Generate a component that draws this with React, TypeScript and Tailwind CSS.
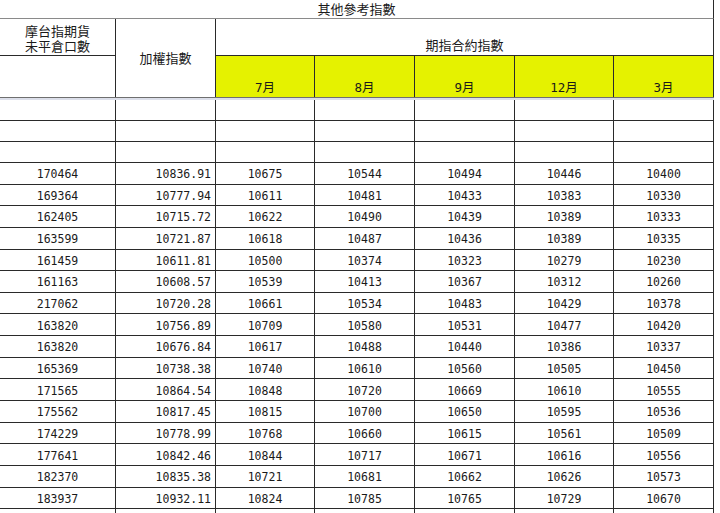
import React from "react";

const cols = "grid grid-cols-[116px_100px_99px_100px_100px_99px_100px]";

const rows: string[][] = [
  ["170464", "10836.91", "10675", "10544", "10494", "10446", "10400"],
  ["169364", "10777.94", "10611", "10481", "10433", "10383", "10330"],
  ["162405", "10715.72", "10622", "10490", "10439", "10389", "10333"],
  ["163599", "10721.87", "10618", "10487", "10436", "10389", "10335"],
  ["161459", "10611.81", "10500", "10374", "10323", "10279", "10230"],
  ["161163", "10608.57", "10539", "10413", "10367", "10312", "10260"],
  ["217062", "10720.28", "10661", "10534", "10483", "10429", "10378"],
  ["163820", "10756.89", "10709", "10580", "10531", "10477", "10420"],
  ["163820", "10676.84", "10617", "10488", "10440", "10386", "10337"],
  ["165369", "10738.38", "10740", "10610", "10560", "10505", "10450"],
  ["171565", "10864.54", "10848", "10720", "10669", "10610", "10555"],
  ["175562", "10817.45", "10815", "10700", "10650", "10595", "10536"],
  ["174229", "10778.99", "10768", "10660", "10615", "10561", "10509"],
  ["177641", "10842.46", "10844", "10717", "10671", "10616", "10556"],
  ["182370", "10835.38", "10721", "10681", "10662", "10626", "10573"],
  ["183937", "10932.11", "10824", "10785", "10765", "10729", "10670"],
];

const months = ["7月", "8月", "9月", "12月", "3月"];

const cell = "border-r border-b border-[#2a2a2a]";

function EmptyRow() {
  return (
    <div className={`${cols} h-[21px]`}>
      {Array.from({ length: 7 }).map((_, i) => (
        <div key={i} className={cell} />
      ))}
    </div>
  );
}

export default function App() {
  return (
    <div
      className="w-[720px] h-[513px] overflow-hidden bg-white text-[#1a1a1a]"
      style={{ fontFamily: '"DejaVu Sans Mono", "Noto Sans CJK TC", monospace' }}
    >
      <div className="w-[714px]">
        {/* header */}
        <div className={`${cols} grid-rows-[19px_37px_41px] text-[13px]`}>
          <div className="col-span-7 border-r border-r-[#2a2a2a] border-b border-b-[#8a8a8a] flex items-center justify-center leading-none">
            其他參考指數
          </div>
          <div className={`${cell} text-center leading-[15px] pt-[5px]`}>
            摩台指期貨
            <br />
            未平倉口數
          </div>
          <div className="row-span-2 border-r border-[#2a2a2a] flex items-center justify-center pt-[1px]">
            加權指數
          </div>
          <div className={`col-span-5 ${cell} flex items-end justify-center pb-0 leading-[18px]`}>
            期指合約指數
          </div>
          <div className="border-r border-[#2a2a2a]" />
          {months.map((m) => (
            <div
              key={m}
              className="bg-[#e5f200] border-r border-[#2a2a2a] flex items-end justify-center pb-0 leading-[18px] text-[12.5px]"
            >
              {m}
            </div>
          ))}
        </div>

        <div className="h-[3px] border-t border-[#6f6f6f] bg-[#dcdfea]" />

        <EmptyRow />
        <EmptyRow />
        <EmptyRow />

        {/* data */}
        <div className="text-[11.5px]">
          {rows.map((r, ri) => (
            <div key={ri} className={`${cols} h-[21.65px]`}>
              {r.map((v, ci) => (
                <div
                  key={ci}
                  className={`${cell} flex items-center pt-[3px] ${
                    ci === 1 ? "justify-end pr-[4px]" : "justify-center"
                  }`}
                >
                  {v}
                </div>
              ))}
            </div>
          ))}
          <EmptyRow />
        </div>
      </div>
    </div>
  );
}
